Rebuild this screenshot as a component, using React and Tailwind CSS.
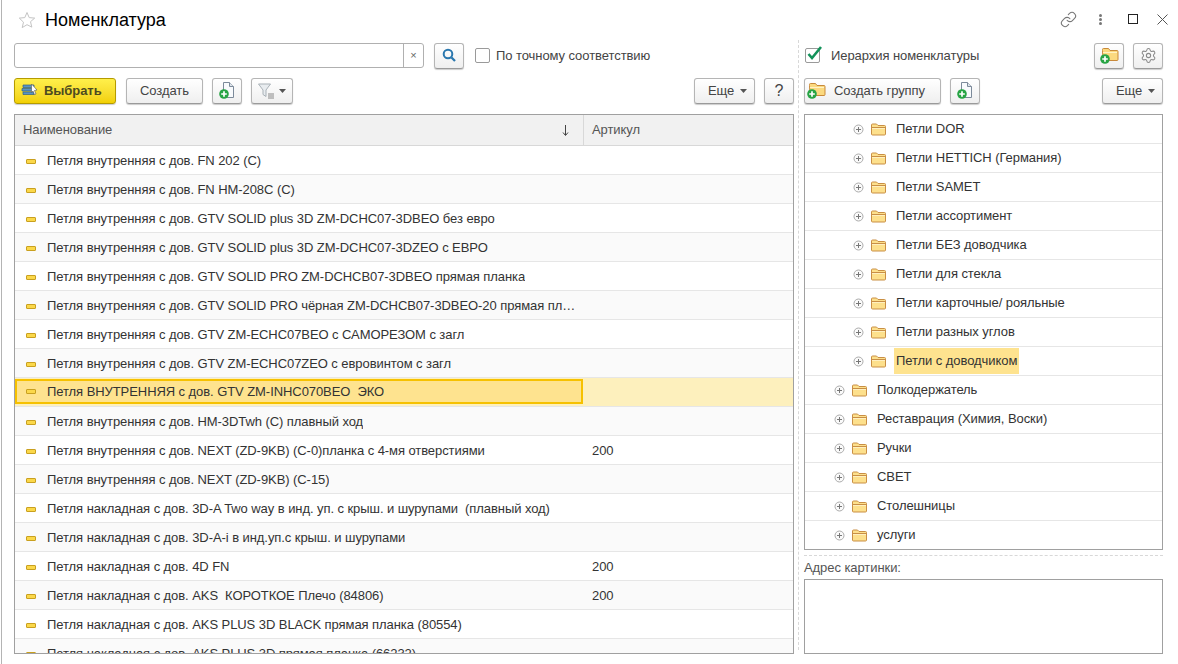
import React from "react";
import { Link, Settings } from "lucide-react";

const Arrow = () => <svg width="7" height="4" viewBox="0 0 7 4"><path d="M0 0h7L3.5 4z" fill="#555" /></svg>;

const PlusBadge = ({ x = 0, y = 0 }) => (
  <g transform={`translate(${x} ${y})`}>
    <circle cx="5" cy="5" r="4.800" fill="#27a444" />
    <path d="M5 2.200v5.600M2.200 5h5.600" stroke="#fff" strokeWidth="1.700" />
  </g>
);

const DocPlus = () => (
  <svg width="16" height="17" viewBox="0 0 16 17">
    <path d="M4.500.5h6l4 4v11h-10z" fill="#f8fafc" stroke="#7c8a9a" />
    <path d="M10.500.5v4h4" fill="#dfe5eb" stroke="#7c8a9a" />
    <PlusBadge x={0} y={7} />
  </svg>
);

const FolderPlus = () => (
  <svg width="19" height="17" viewBox="0 0 19 17">
    <path d="M2.500 3.500v-1a1 1 0 0 1 1-1h5l1.500 2h7a1 1 0 0 1 1 1v8a1 1 0 0 1-1 1h-13a1 1 0 0 1-1-1z" fill="#fbd97f" stroke="#c8893a" />
    <path d="M3 5.500h14" stroke="#fff2c5" />
    <PlusBadge x={0} y={7} />
  </svg>
);

const Folder = () => (
  <svg width="15" height="13" viewBox="0 0 15 13" className="shrink-0 block">
    <path d="M.5 3V2a1 1 0 0 1 1-1h4l1.500 1.500h6.500a1 1 0 0 1 1 1V11a1 1 0 0 1-1 1h-12a1 1 0 0 1-1-1z" fill="#fde08c" stroke="#c98f45" />
    <path d="M1 4.500h13" stroke="#c98f45" />
    <path d="M1 5.500h13" stroke="#fff0c0" />
  </svg>
);

const Expand = () => (
  <svg width="11" height="11" viewBox="0 0 11 11" className="shrink-0">
    <circle cx="5.500" cy="5.500" r="4.500" fill="#fafafa" stroke="#ababab" />
    <path d="M3 5.500h5M5.500 3v5" stroke="#777" />
  </svg>
);

const Btn = ({ className = "", children }) => (
  <div className={"flex items-center justify-center h-[26px] rounded-[3px] border border-[#b5b5b5] border-b-[#9a9a9a] bg-gradient-to-b from-white to-[#efefef] shadow-[0_1px_1px_rgba(0,0,0,0.2)] text-[#444] " + className}>
    {children}
  </div>
);

const rows = [
  ["Петля внутренняя с дов. FN 202 (С)", ""],
  ["Петля внутренняя с дов. FN HM-208C (С)", ""],
  ["Петля внутренняя с дов. GTV SOLID plus 3D ZM-DCHC07-3DBEO без евро", ""],
  ["Петля внутренняя с дов. GTV SOLID plus 3D ZM-DCHC07-3DZEO с ЕВРО", ""],
  ["Петля внутренняя с дов. GTV SOLID PRO ZM-DCHCB07-3DBEO прямая планка", ""],
  ["Петля внутренняя с дов. GTV SOLID PRO чёрная ZM-DCHCB07-3DBEO-20 прямая планка", ""],
  ["Петля внутренняя с дов. GTV ZM-ECHC07BEO с САМОРЕЗОМ с загл", ""],
  ["Петля внутренняя с дов. GTV ZM-ECHC07ZEO с евровинтом с загл", ""],
  ["Петля ВНУТРЕННЯЯ с дов. GTV ZM-INHC070BEO  ЭКО", "", true],
  ["Петля внутренняя с дов. HM-3DTwh (С) плавный ход", ""],
  ["Петля внутренняя с дов. NEXT (ZD-9KB) (С-0)планка с 4-мя отверстиями", "200"],
  ["Петля внутренняя с дов. NEXT (ZD-9KB) (С-15)", ""],
  ["Петля накладная с дов. 3D-A Two way в инд. уп. с крыш. и шурупами  (плавный ход)", ""],
  ["Петля накладная с дов. 3D-A-i в инд.уп.с крыш. и шурупами", ""],
  ["Петля накладная с дов. 4D FN", "200"],
  ["Петля накладная с дов. AKS  КОРОТКОЕ Плечо (84806)", "200"],
  ["Петля накладная с дов. AKS PLUS 3D BLACK прямая планка (80554)", ""],
  ["Петля накладная с дов. AKS PLUS 3D прямая планка (66232)", ""],
];

const tree = [
  ["Петли DOR", 1], ["Петли HETTICH (Германия)", 1], ["Петли SAMET", 1], ["Петли ассортимент", 1],
  ["Петли БЕЗ доводчика", 1], ["Петли для стекла", 1], ["Петли карточные/ рояльные", 1], ["Петли разных углов", 1],
  ["Петли с доводчиком", 1, true], ["Полкодержатель", 0], ["Реставрация (Химия, Воски)", 0], ["Ручки", 0],
  ["СВЕТ", 0], ["Столешницы", 0], ["услуги", 0],
];

export default function App() {
  return (
    <div className="w-[1178px] h-[664px] overflow-hidden bg-white pl-px text-[13px] tracking-[-0.07px] text-[#333]" style={{ fontFamily: '"Liberation Sans", Arial, sans-serif' }}>
      <div className="h-full border-l border-[#b4b4b4]">
        <div className="flex items-center h-[40px] pl-[16px] pr-[10px]">
          <svg width="18" height="18" viewBox="0 0 18 18"><path d="M9 1.500l2.200 5.100 5.500.5-4.200 3.600 1.300 5.400L9 13.700l-4.800 2.900 1.300-5.400L1.300 7.100l5.500-.5z" fill="#fff" stroke="#c4c4c4" /></svg>
          <div className="ml-[9px] text-[18px] tracking-normal text-black">Номенклатура</div>
          <div className="ml-auto flex items-center -mt-[2px]">
            <Link size={17} strokeWidth={1.5} color="#777" />
            <div className="ml-[22px] flex flex-col gap-[1px]"><i className="block w-[3px] h-[3px] rounded-full bg-[#777]" /><i className="block w-[3px] h-[3px] rounded-full bg-[#777]" /><i className="block w-[3px] h-[3px] rounded-full bg-[#777]" /></div>
            <div className="ml-[26px] w-[10px] h-[10px] border border-[#222]" />
            <svg className="ml-[19px]" width="11" height="11" viewBox="0 0 11 11"><path d="M.5.500l10 10M10.500.500l-10 10" stroke="#555" /></svg>
          </div>
        </div>

        <div className="flex pl-[12px]">
          <div className="w-[780px] shrink-0">
            <div className="flex items-center h-[27px] mt-[2px]">
              <div className="flex w-[410px] h-[25px] rounded-[3px] border border-[#b0b0b0] bg-white">
                <div className="flex-1" />
                <div className="w-[20px] border-l border-[#b0b0b0] flex items-center justify-center text-[#666] text-[11px]">×</div>
              </div>
              <Btn className="ml-[10px] w-[30px]">
                <svg width="15" height="15" viewBox="0 0 15 15" fill="none"><circle cx="6" cy="6" r="4.300" stroke="#2a77ae" strokeWidth="2" /><path d="M9.500 9.500l3.500 3.500" stroke="#2a77ae" strokeWidth="2.300" /></svg>
              </Btn>
              <div className="ml-[11px] w-[15px] h-[15px] rounded-[2px] border border-[#9a9a9a] bg-white" />
              <div className="ml-[6px] text-[#444]">По точному соответствию</div>
            </div>
            <div className="flex items-center mt-[8px] h-[27px]">
              <div className="flex items-center w-[102px] h-[26px] rounded-[3px] border border-[#b59b00] bg-gradient-to-b from-[#fff04a] to-[#f2d000] shadow-[0_1px_1px_rgba(0,0,0,0.2)] pl-[6px]">
                <svg width="18" height="17" viewBox="0 0 18 17"><path d="M2 3h11v2.500H2zM1 6.500h12V9H1zM2 10h11v2.500H2z" fill="#5a94c4" stroke="#2f5f88" strokeWidth=".7" /><path d="M10.500 2l5.500 6-2.500.5 1.500 3.500-1.500.6-1.500-3.500-1.500 1.500z" fill="#fff" stroke="#555" strokeWidth=".6" /></svg>
                <span className="ml-[5px] font-bold text-[#4d4a20]">Выбрать</span>
              </div>
              <Btn className="ml-[10px] w-[77px]">Создать</Btn>
              <Btn className="ml-[9px] w-[30px]"><DocPlus /></Btn>
              <Btn className="ml-[9px] w-[42px] gap-[5px]">
                <svg width="16" height="16" viewBox="0 0 16 16"><path d="M.5 1h12L8 7v6.500L5 11.500V7z" fill="#e8ecef" stroke="#a9b1b7" /><path d="M10 11h6M10 13h6M10 15h6" stroke="#888" /></svg>
                <Arrow />
              </Btn>
              <Btn className="ml-auto w-[61px] gap-[6px] pl-[6px]">Еще <Arrow /></Btn>
              <Btn className="ml-[9px] w-[30px] text-[16px]">?</Btn>
            </div>
            <div className="mt-[10px] h-[540px] border border-[#a0a0a0] overflow-hidden">
              <div className="flex h-[31px] bg-[#f1f1f1] border-b border-[#d8d8d8] text-[#555]">
                <div className="flex items-center w-[569px] pl-[8px] pr-[14px] border-r border-[#d8d8d8]">
                  <span>Наименование</span>
                  <svg className="ml-auto" width="7" height="11" viewBox="0 0 7 11"><path d="M3.500 0v10M1 7.500l2.500 3 2.500-3" fill="none" stroke="#444" /></svg>
                </div>
                <div className="flex items-center pl-[8px]">Артикул</div>
              </div>
              {rows.map(([name, art, sel], i) => (
                <div key={i} className={"flex h-[29px] border-b border-[#e6e6e6] " + (sel ? "bg-[#fdf0bd]" : i % 2 ? "bg-[#fafafa]" : "bg-white")}>
                  <div className={"flex items-center w-[568px] shrink-0 pr-[1px] " + (sel ? "mt-[1px] mb-[2px] pl-[9px] border-2 border-[#f6c100] bg-[#fee38f]" : "pt-[2px] pl-[11px]")}>
                    <span className="w-[10px] h-[5px] shrink-0 rounded-[1px] bg-[#fbd84a] border border-[#c9a020]" />
                    <span className="ml-[11px] truncate whitespace-pre">{name}</span>
                  </div>
                  <div className="flex items-center pt-[2px] pl-[9px]">{art}</div>
                </div>
              ))}
            </div>
          </div>

          <div className="ml-[4px] w-0 h-[610px] border-l border-dashed border-[#d8d8d8]" />

          <div className="ml-[5px] w-[359px] shrink-0">
            <div className="flex items-center h-[27px] mt-[2px]">
              <div className="relative w-[15px] h-[15px] ml-[1px] rounded-[2px] border border-[#9a9a9a] bg-white">
                <svg className="absolute -top-[4px] left-0" width="17" height="16" viewBox="0 0 17 16"><path d="M2.500 9l3.500 4L15 2" fill="none" stroke="#13925a" strokeWidth="2.600" /></svg>
              </div>
              <div className="ml-[11px] text-[#444]">Иерархия номенклатуры</div>
              <Btn className="ml-auto w-[30px]"><FolderPlus /></Btn>
              <Btn className="ml-[9px] w-[30px]"><Settings size={17} strokeWidth={1.5} color="#8a8a8a" /></Btn>
            </div>
            <div className="flex items-center mt-[8px] h-[27px]">
              <Btn className="w-[137px] justify-start pl-[2px] gap-[8px]"><FolderPlus /> Создать группу</Btn>
              <Btn className="ml-[9px] w-[30px]"><DocPlus /></Btn>
              <Btn className="ml-auto w-[61px] gap-[6px] pl-[6px]">Еще <Arrow /></Btn>
            </div>
            <div className="mt-[10px] h-[436px] border border-[#a0a0a0] overflow-hidden">
              {tree.map(([name, nested, sel], i) => (
                <div key={i} className={"flex items-center h-[29px] border-b border-[#e6e6e6] " + (nested ? "pl-[48px]" : "pl-[29px]")}>
                  <Expand />
                  <span className="ml-[7px]"><Folder /></span>
                  <span className={"h-[26px] flex items-center " + (sel ? "bg-[#fee38f] ml-[8px] px-[2px]" : "ml-[10px]")}>{name}</span>
                </div>
              ))}
            </div>
            <div className="mt-[5px] border-t border-dashed border-[#d8d8d8] pt-[4px] leading-[16px] text-[#555]">Адрес картинки:</div>
            <div className="mt-[3px] h-[75px] border border-[#a0a0a0]" />
          </div>
        </div>
      </div>
    </div>
  );
}
